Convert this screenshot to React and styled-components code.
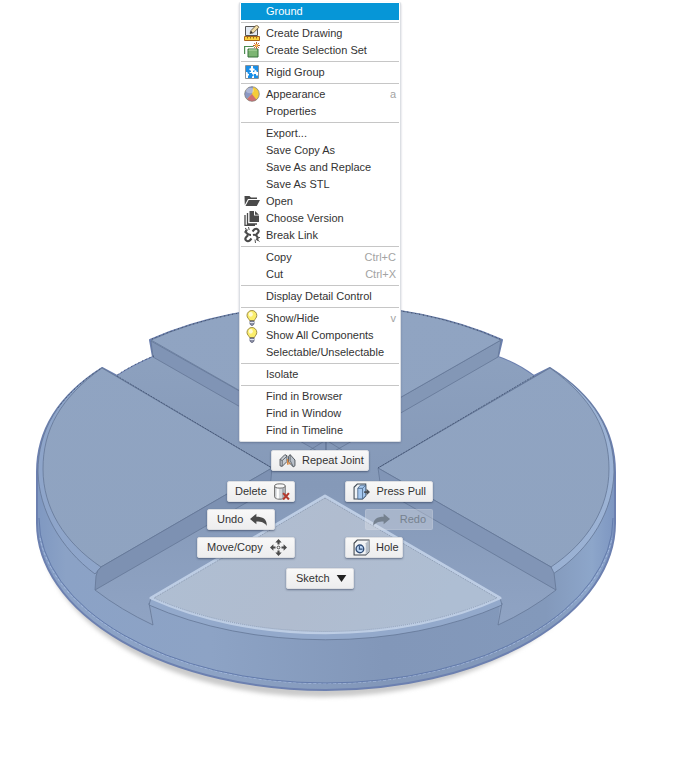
import React from "react";
import styled, { createGlobalStyle, css } from "styled-components";

const GlobalStyle = createGlobalStyle`
  *, *::before, *::after { box-sizing: border-box; }
  body {
    margin: 0;
    background: #fff;
    color: #333;
    font: 11px/17px "Liberation Sans", Arial, sans-serif;
  }
  button { font: inherit; color: inherit; }
`;

const Viewport = styled.main`
  position: relative;
  min-height: 100vh;
  overflow: hidden;
`;

const Model = styled.svg`
  display: block;
  width: 100%;
  height: 100vh;
`;

const Popup = styled.div`
  position: absolute;
  top: 2px;
  left: calc(50% - 17px);
  transform: translateX(-50%);
  display: flex;
  flex-direction: column;
  align-items: center;
  gap: 8px;
`;

const Menu = styled.div`
  width: 162px;
  padding: 1px 1px 2px;
  background: #fff;
  border: 1px solid #dcdfe4;
  border-top: 0;
  border-radius: 2px;
  box-shadow: 0 1px 2px rgba(40, 50, 80, 0.3);
`;

const MenuItem = styled.button`
  display: grid;
  grid-template-columns: 24px 1fr auto;
  align-items: start;
  width: 100%;
  height: 17px;
  padding: 0 3px 0 1px;
  border: 0;
  text-align: left;
  white-space: nowrap;
  background: ${(p) => (p.$active ? "#0696d7" : "transparent")};
  ${(p) => p.$active && css`color: #fff;`}
  svg { display: block; margin-left: 2px; }
`;

const Label = styled.span`
  grid-column: 2;
`;

const Shortcut = styled.kbd`
  font: inherit;
  color: #a3a3a3;
`;

const Separator = styled.hr`
  height: 1px;
  margin: 2px 0;
  border: 0;
  background: #c6c6c6;
`;

const Marking = styled.div`
  display: flex;
  flex-direction: column;
  align-items: center;
  gap: 10px;
`;

const Wheel = styled.div`
  display: flex;
  flex-direction: column;
  gap: 7px;
`;

const Pair = styled.div`
  display: grid;
  grid-template-columns: 98px 98px;
  column-gap: ${(p) => (p.$wide ? "90px" : "50px")};
  justify-content: center;
  > :first-child { justify-self: end; }
  > :last-child { justify-self: start; }
`;

const Pill = styled.button`
  display: flex;
  align-items: center;
  justify-content: space-between;
  gap: 6px;
  width: ${(p) => p.$width}px;
  height: 21px;
  padding: ${(p) => (p.$iconSide === "right" ? "0 7px 0 9px" : "0 6px 0 7px")};
  border: 1px solid #dcdee2;
  border-radius: 2px;
  background: linear-gradient(#f8f8f8, #ededee);
  box-shadow: 0 1px 2px rgba(30, 42, 70, 0.5);
  white-space: nowrap;
  svg { flex: none; display: block; }
  &:disabled {
    color: #76828f;
    background: rgba(225, 228, 233, 0.36);
    border-color: rgba(215, 222, 232, 0.2);
    box-shadow: none;
  }
`;

const Icon = ({ size = 16, children }) => (
  <svg width={size} height={size} viewBox="0 0 16 16" fill="none" aria-hidden="true">
    {children}
  </svg>
);

const icons = {
  drawing: (
    <Icon>
      <path d="M1.500 1.500h12v9h-12z" fill="#e3eaf3" stroke="#555" />
      <path d="M6 8.500l1-3L12.500 0l2.500 2.200L9.300 8z" fill="#f3dfa8" stroke="#5b4930" strokeWidth=".8" />
      <path d="M6 8.500l1-2.500 1.800 1.600z" fill="#222" />
      <path d="M.5 11.500h15v4H.5z" fill="#fbd33f" stroke="#a8641d" />
      <path d="M3.500 12v1.500M6.500 12v1.500M9.500 12v1.500M12.500 12v1.500" stroke="#9b6a18" />
    </Icon>
  ),
  selection: (
    <Icon>
      <path d="M.6 12V4.500h9" stroke="#4c8c51" strokeWidth="1.200" />
      <path d="M4 7h10v8H4z" fill="#7db573" stroke="#37703a" />
      <path d="M5 8.500V8h8" stroke="#b8dca9" />
      <path d="M12.500 0v7M9 3.500h7M10.100 1.100l4.800 4.800M14.900 1.100l-4.800 4.800" stroke="#c0602c" />
      <circle cx="12.500" cy="3.500" r="1.400" fill="#ffc95a" />
    </Icon>
  ),
  rigid: (
    <Icon>
      <path d="M1.500 1.500h13v13h-13z" fill="#fff" stroke="#8a929a" />
      <path d="M2 2h5v2.500c-2-.8-2.500 2.500 0 2V8H5.500c1 2.500-2.500 2.500-2 0H2z" fill="#1a8fe8" />
      <path d="M9 2h5v6h-1.500c.8-2.500-3-2.500-2 0H9V6.500c2 .8 2.500-2.500 0-2z" fill="#1a8fe8" />
      <path d="M6.500 9H8v1.500c2.200-.8 2.200 2.500 0 1.800V14H4v-2.500h1V9z" fill="#1a8fe8" />
      <path d="M10 10h4v4h-4z" fill="#1a8fe8" />
      <path d="M12 9.500h2v2h-2z" fill="#fff" />
    </Icon>
  ),
  appearance: (
    <Icon>
      <circle cx="8" cy="8" r="7.300" fill="#f4cc3a" />
      <path d="M8 8L5 1.300A7.300 7.300 0 0 1 9 .8z" fill="#9aa6dd" />
      <path d="M8 8L9 .8A7.300 7.300 0 0 0 3 13.300z" fill="#8b98c4" />
      <path d="M8 8L3 13.300A7.300 7.300 0 0 0 12.500 13.800z" fill="#cf6f72" />
      <circle cx="8" cy="8" r="7.300" stroke="#777b84" strokeOpacity=".7" />
      <ellipse cx="6" cy="4.500" rx="4" ry="2.800" fill="#fff" opacity=".3" />
    </Icon>
  ),
  open: (
    <Icon>
      <path d="M.5 3h5l1.500 1.500h6V6H4L.8 12z" fill="#4a4a4a" />
      <path d="M4.700 7H16l-3.200 6H1.500z" fill="#4a4a4a" />
    </Icon>
  ),
  version: (
    <Icon>
      <path d="M5.500 1H10v4.500h5V12H5.500z" fill="#4a4a4a" />
      <path d="M11 1l4 3.700h-4z" fill="#4a4a4a" />
      <path d="M3.500 3v11H13M1 5v10.500h10" stroke="#4a4a4a" strokeWidth="1.300" />
    </Icon>
  ),
  breakLink: (
    <Icon>
      <g stroke="#4a4a4a" strokeWidth="2.100">
        <path d="M8.500 4.500l1.700-1.900c2.500-2.200 5.800.8 3.700 3.200L12 7.700" />
        <path d="M7.500 11.500l-1.700 1.900c-2.500 2.200-5.800-.8-3.700-3.200L4 8.300" />
        <path d="M9 8c3-1 6 2.500 3.700 5.200M7 8C3 8 1 5 2.500 3" />
      </g>
      <path d="M4.500 0l.7 3M1 1l3 2.500M0 5h3M11 12.500l.5 3.500M12.500 12l3 2.500M13 10.500h3" stroke="#555" />
    </Icon>
  ),
  bulb: (
    <Icon>
      <path d="M5.500 10.500C5 8.500 3 8 3 5.400a4.900 4.900 0 0 1 9.800 0c0 2.600-1.900 3.100-2.300 5.100z" fill="#fbee6c" stroke="#a08f45" />
      <ellipse cx="6.800" cy="4.300" rx="2" ry="2.400" fill="#fffbd5" />
      <path d="M6 11h4v3l-1 1.300H7L6 14z" fill="#8f93a8" stroke="#5c6078" strokeWidth=".8" />
      <path d="M6 12.500h4" stroke="#dfe3ef" />
    </Icon>
  ),
  joint: (
    <Icon size={17}>
      <path d="M1 13V7l4.500-4.500 2 1V9L3 13.500z" fill="#c9ced4" stroke="#50555b" strokeWidth=".9" />
      <path d="M1 7l2 1v5.500M3 8l4.500-4" stroke="#50555b" strokeWidth=".8" />
      <path d="M9 9.500V4l1.500-1.500L15 7.500v5.500l-1.500 1L9.500 10z" fill="#b9c0c9" stroke="#50555b" strokeWidth=".9" />
      <path d="M10.500 2.500V8l3 6" stroke="#50555b" strokeWidth=".7" />
      <path d="M7.500 6.500h1.200V12H7.500zM9 9l2 2-2 1z" fill="#d98a45" />
    </Icon>
  ),
  remove: (
    <Icon size={17}>
      <path d="M1.500 3v10c0 3 10 3 10 0V3z" fill="#d4d7db" stroke="#666" strokeWidth=".9" />
      <path d="M3.500 5v9.500h2V5z" fill="#fff" />
      <path d="M8.500 5v9.500h2V5z" fill="#a9aeb5" />
      <ellipse cx="6.500" cy="2.800" rx="5" ry="2" fill="#f8f8f8" stroke="#666" strokeWidth=".9" />
      <path d="M9.500 9.500l5.500 6M15 9.500l-5.500 6" stroke="#b4382d" strokeWidth="2" />
    </Icon>
  ),
  undo: (
    <Icon size={17}>
      <path d="M0 7.500l6-5v3c6 0 10 2 9.800 8.500C14 11 11 9.800 6 9.800v2.700z" fill="#4a4a4a" />
    </Icon>
  ),
  redo: (
    <Icon size={17}>
      <path d="M16 7.500l-6-5v3C4 5.500 0 7.500.2 14 2 11 5 9.800 10 9.800v2.700z" fill="#75818f" />
    </Icon>
  ),
  move: (
    <Icon size={17}>
      <path d="M8 0l3 3.200H9v2H7v-2H5zM8 16l3-3.200H9v-2H7v2H5zM0 8l3.200-3v2h2v2h-2v2zM16 8l-3.200-3v2h-2v2h2v2z" fill="#4a4a4a" />
      <circle cx="8" cy="8" r="1.300" stroke="#4a4a4a" strokeWidth=".9" />
    </Icon>
  ),
  press: (
    <Icon size={17}>
      <path d="M1 4l3-3h8v11l-3 3H1z" fill="#eef2f6" stroke="#414b55" />
      <path d="M4.500 5L7 2h5v10l-3 3H4.500z" fill="#a6c8ef" stroke="#4a6788" strokeWidth=".8" />
      <path d="M4.500 5H9v10M9 5l3-3" stroke="#4a6788" strokeWidth=".8" />
      <path d="M10.500 7.700h2.300V5.500L16 8.500l-3.200 3V9.300h-2.300z" fill="#4a4f55" />
    </Icon>
  ),
  hole: (
    <Icon size={17}>
      <path d="M1 4l3-3h11v11l-3 3H1z" fill="#f2f3f4" stroke="#41474e" />
      <path d="M12 4l3-3v11l-3 3z" fill="#b5bdc7" />
      <circle cx="6.500" cy="9.300" r="3.600" fill="#bed8f6" stroke="#304c76" strokeWidth="1.300" />
      <path d="M6 6.500v3h3" stroke="#304c76" />
    </Icon>
  ),
  down: (
    <Icon size={11}>
      <path d="M1 3h14L8 13z" fill="#222" />
    </Icon>
  ),
};

const groups = [
  [{ label: "Ground", active: true }],
  [{ label: "Create Drawing", icon: "drawing" }, { label: "Create Selection Set", icon: "selection" }],
  [{ label: "Rigid Group", icon: "rigid" }],
  [{ label: "Appearance", icon: "appearance", keys: "a" }, { label: "Properties" }],
  [
    { label: "Export..." },
    { label: "Save Copy As" },
    { label: "Save As and Replace" },
    { label: "Save As STL" },
    { label: "Open", icon: "open" },
    { label: "Choose Version", icon: "version" },
    { label: "Break Link", icon: "breakLink" },
  ],
  [{ label: "Copy", keys: "Ctrl+C" }, { label: "Cut", keys: "Ctrl+X" }],
  [{ label: "Display Detail Control" }],
  [
    { label: "Show/Hide", icon: "bulb", keys: "v" },
    { label: "Show All Components", icon: "bulb" },
    { label: "Selectable/Unselectable" },
  ],
  [{ label: "Isolate" }],
  [{ label: "Find in Browser" }, { label: "Find in Window" }, { label: "Find in Timeline" }],
];

function Disc() {
  return (
    <Model viewBox="0 0 674 768" role="img" aria-label="Disc with cross-shaped groove">
      <defs>
        <linearGradient id="side" x1="37" x2="615" y1="0" y2="0" gradientUnits="userSpaceOnUse">
          <stop offset="0" stopColor="#7f98c1" />
          <stop offset=".05" stopColor="#8ba2c6" />
          <stop offset=".3" stopColor="#8da3c5" />
          <stop offset=".6" stopColor="#8297b9" />
          <stop offset=".88" stopColor="#8399bb" />
          <stop offset=".96" stopColor="#8da6ca" />
          <stop offset="1" stopColor="#7d96c1" />
        </linearGradient>
        <linearGradient id="top" x1="0" x2="0" y1="305" y2="600" gradientUnits="userSpaceOnUse">
          <stop offset="0" stopColor="#90a4c2" />
          <stop offset="1" stopColor="#8fa3c0" />
        </linearGradient>
        <linearGradient id="floor" x1="0" x2="0" y1="350" y2="620" gradientUnits="userSpaceOnUse">
          <stop offset="0" stopColor="#8da1bf" />
          <stop offset=".5" stopColor="#8599b8" />
          <stop offset="1" stopColor="#8fa3c3" />
        </linearGradient>
        <linearGradient id="rim" x1="37" x2="615" y1="0" y2="0" gradientUnits="userSpaceOnUse">
          <stop offset="0" stopColor="#8ea5ca" />
          <stop offset=".5" stopColor="#91a7c9" />
          <stop offset="1" stopColor="#9cb3d5" />
        </linearGradient>
        <linearGradient id="selected" x1="200" x2="430" y1="510" y2="630" gradientUnits="userSpaceOnUse">
          <stop offset="0" stopColor="#afbed2" />
          <stop offset=".5" stopColor="#b0bccf" />
          <stop offset="1" stopColor="#aebed3" />
        </linearGradient>
        <filter id="soft" x="-10%" y="-10%" width="120%" height="120%">
          <feGaussianBlur stdDeviation="2" />
        </filter>
      </defs>

      <ellipse cx="322" cy="529" rx="281" ry="168" fill="#cacaca" filter="url(#soft)" />

      <path
        d="M150 340A289 167 0 0 1 502 340L498 357Q516 363 534 376L550 368C594 396 615 430 615 472V523A289 167 0 0 1 37 523V472C37 430 58 396 102 368L117 376Q134 365 153 357Z"
        fill="url(#side)"
        stroke="#6c80b0"
        strokeWidth="2"
        strokeLinejoin="round"
      />
      <path d="M40 536A288 165 0 0 0 612 536" transform="translate(0 2)" fill="none" stroke="#a5bae0" strokeWidth="1" strokeDasharray="3 2" />
      <path d="M39 518A287 165 0 0 0 613 518" fill="none" stroke="#637bac" strokeWidth="1" />

      <path
        d="M153 357Q134 365 117 376L272 468 270 480 95 590Q121 610 153 625L151 600 325 496 500 600 498 625Q529 611 556 590L381 480 378 468 534 376Q516 363 498 357L326 440Z"
        fill="url(#floor)"
      />

      <g stroke="#647797" strokeWidth=".8" strokeLinejoin="round">
        <path d="M151 341L326 440V456L153 357Z" fill="#8094b5" />
        <path d="M501 340L326 440V456L498 357Z" fill="#8397b6" />
        <path d="M151 340A283 163 0 0 1 501 340L326 440Z" fill="url(#top)" />

        <path d="M102 368C58 396 38 430 38 472C39 510 60 548 95 574L101 567 272 468Z" fill="url(#rim)" />
        <path d="M550 368C594 396 614 430 614 472C613 510 592 548 553 574L551 567 378 468Z" fill="url(#rim)" />
        <path d="M102 368C60 398 43 430 43 469C43 508 64 542 101 567L272 468Z" fill="url(#top)" />
        <path d="M550 368C592 398 609 430 609 469C609 508 588 542 551 567L378 468Z" fill="url(#top)" />
        <path d="M272 468L101 567Q97 570 96 576L95 590 270 489Z" fill="#7d91b2" />
        <path d="M378 468L551 567 554 573 556 590 381 489Z" fill="#8195b6" />

        <path d="M95 590Q121 610 153 625L149 603M556 590Q529 611 498 625L502 603" fill="none" />
        <path d="M151 598L149 605A289 167 0 0 0 502 605L500 598A283 163 0 0 1 151 598Z" fill="#93a9cb" />
        <path d="M326 440V462M310 450L326 440 342 450" fill="none" />
      </g>

      <path d="M117 376L272 468M534 376L378 468" fill="none" stroke="#3f4f6f" strokeDasharray="2 1" strokeWidth=".8" />
      <path d="M152 339A288 166 0 0 1 500 339M154 356Q134 364 117 375M100 369Q74 386 58 408" fill="none" stroke="#33415f" strokeDasharray="1 3" />

      <path
        d="M325 496L151 598A283 163 0 0 0 500 598Z"
        fill="url(#selected)"
        stroke="#bdcde4"
        strokeWidth="3"
        strokeLinejoin="round"
      />
      <path d="M325 498L154 598A281 161 0 0 0 497 598Z" fill="none" stroke="#78879d" strokeDasharray="1 1" strokeWidth=".7" />
    </Model>
  );
}

export default function App() {
  return (
    <Viewport>
      <GlobalStyle />
      <Disc />
      <Popup>
        <Menu role="menu" aria-label="Component actions">
          {groups.map((items, i) => (
            <React.Fragment key={i}>
              {i > 0 && <Separator />}
              {items.map((item) => (
                <MenuItem key={item.label} type="button" role="menuitem" $active={item.active}>
                  {item.icon && icons[item.icon]}
                  <Label>{item.label}</Label>
                  {item.keys && <Shortcut>{item.keys}</Shortcut>}
                </MenuItem>
              ))}
            </React.Fragment>
          ))}
        </Menu>
        <Marking>
          <Pill type="button" $width={98}>{icons.joint}Repeat Joint</Pill>
          <Wheel>
            <Pair>
              <Pill type="button" $width={68}>Delete{icons.remove}</Pill>
              <Pill type="button" $width={88}>{icons.press}Press Pull</Pill>
            </Pair>
            <Pair $wide>
              <Pill type="button" $width={68} $iconSide="right">Undo{icons.undo}</Pill>
              <Pill type="button" $width={68} disabled>{icons.redo}Redo</Pill>
            </Pair>
            <Pair>
              <Pill type="button" $width={98} $iconSide="right">Move/Copy{icons.move}</Pill>
              <Pill type="button" $width={58}>{icons.hole}Hole</Pill>
            </Pair>
          </Wheel>
          <Pill type="button" $width={68} $iconSide="right" aria-haspopup="menu">Sketch{icons.down}</Pill>
        </Marking>
      </Popup>
    </Viewport>
  );
}
